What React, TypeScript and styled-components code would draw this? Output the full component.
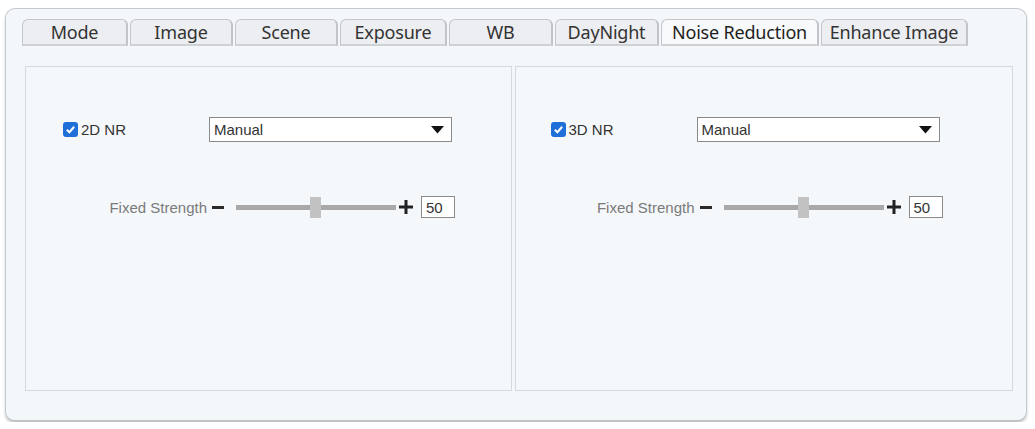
import React from 'react';
import styled, { createGlobalStyle } from 'styled-components';

const GlobalStyle = createGlobalStyle`
  html, body {
    margin: 0;
    padding: 0;
    background: #ffffff;
  }
  * {
    box-sizing: border-box;
  }
`;

const Frame = styled.div`
  margin: 8px 0 0 5px;
  width: 1022px;
  height: 414px;
  border: 1px solid #c6cacf;
  border-bottom: 2px solid #bfc3c8;
  border-radius: 10px;
  background: #f4f7fa;
  box-shadow: 0 2px 3px rgba(0, 0, 0, 0.18);
  display: flex;
  flex-direction: column;
`;

const TabBar = styled.div`
  display: flex;
  gap: 2px;
  padding: 10px 0 0 16px;
`;

const Tab = styled.div<{ $w: number; $active?: boolean }>`
  width: ${(p) => p.$w}px;
  height: 27px;
  display: flex;
  align-items: center;
  justify-content: center;
  border: 1px solid #c3c7cb;
  border-right: 2px solid #c0c4c8;
  border-bottom: 2px solid #cfd2d5;
  border-radius: 6px 6px 0 0;
  background: ${(p) => (p.$active ? '#f8f9fb' : '#eceef1')};
  color: ${(p) => (p.$active ? '#1e1e1e' : '#333333')};
  font-family: 'Noto Sans', 'Open Sans', sans-serif;
  font-size: 18px;
  letter-spacing: -0.2px;
  white-space: nowrap;
`;

const Panels = styled.div`
  display: flex;
  gap: 3px;
  padding: 20px 13px 0 19px;
`;

const Panel = styled.div<{ $w: number; $inset: number }>`
  width: ${(p) => p.$w}px;
  height: 325px;
  border: 1px solid #d6dadf;
  background: #f5f8fb;
  padding: 50px 0 0 ${(p) => p.$inset}px;
`;

const ModeRow = styled.div`
  display: flex;
  align-items: center;
  height: 25px;
`;

const CheckGroup = styled.label`
  width: 146px;
  display: flex;
  align-items: center;
  gap: 3px;
  font-family: 'Liberation Sans', Arial, sans-serif;
  font-size: 15px;
  color: #333333;
`;

const CheckBox = styled.span`
  width: 15px;
  height: 15px;
  border-radius: 3px;
  background: #1f6fd8;
  display: inline-flex;
  align-items: center;
  justify-content: center;
`;

const Select = styled.div`
  width: 243px;
  height: 25px;
  border: 1px solid #8a8a8a;
  background: #ffffff;
  display: flex;
  align-items: center;
  justify-content: space-between;
  padding: 0 7px 0 4px;
  font-family: 'Liberation Sans', Arial, sans-serif;
  font-size: 15px;
  color: #333333;
`;

const SliderRow = styled.div`
  display: flex;
  align-items: center;
  height: 22px;
  margin-top: 54px;
`;

const SliderLabel = styled.span`
  width: 144px;
  text-align: right;
  font-family: 'Liberation Sans', Arial, sans-serif;
  font-size: 15px;
  color: #7a7a7a;
`;

const Minus = styled.span`
  width: 12px;
  height: 3px;
  background: #2a2a2a;
  margin: 0 12px 0 5px;
`;

const Track = styled.div`
  position: relative;
  width: 160px;
  height: 5px;
  background: #a9a9a9;
`;

const Thumb = styled.span`
  position: absolute;
  top: -8px;
  width: 11px;
  height: 21px;
  background: #c2c2c2;
`;

const Plus = styled.span`
  margin: 0 8px 0 3px;
  display: inline-flex;
`;

const ValueBox = styled.div`
  width: 34px;
  height: 22px;
  border: 1px solid #8a8a8a;
  background: #ffffff;
  display: flex;
  align-items: center;
  padding-left: 4px;
  font-family: 'Liberation Sans', Arial, sans-serif;
  font-size: 15px;
  color: #333333;
`;

const tabs = [
  { name: 'Mode', w: 106 },
  { name: 'Image', w: 103 },
  { name: 'Scene', w: 103 },
  { name: 'Exposure', w: 107 },
  { name: 'WB', w: 104 },
  { name: 'DayNight', w: 104 },
  { name: 'Noise Reduction', w: 158, active: true },
  { name: 'Enhance Image', w: 147 },
];

const panels = [
  { label: '2D NR', w: 487, inset: 37 },
  { label: '3D NR', w: 499, inset: 35 },
];

const NRPanel = ({ label, w, inset }: { label: string; w: number; inset: number }) => {
  const value = 50;
  return (
    <Panel $w={w} $inset={inset}>
      <ModeRow>
        <CheckGroup>
          <CheckBox>
            <svg width="11" height="11" viewBox="0 0 12 12">
              <path d="M2 6.3 L4.8 9 L10 3" fill="none" stroke="#ffffff" strokeWidth="2.2" />
            </svg>
          </CheckBox>
          {label}
        </CheckGroup>
        <Select>
          Manual
          <svg width="13" height="8" viewBox="0 0 13 8">
            <path d="M0 0 H13 L6.5 7.5 Z" fill="#111111" />
          </svg>
        </Select>
      </ModeRow>
      <SliderRow>
        <SliderLabel>Fixed Strength</SliderLabel>
        <Minus />
        <Track>
          <Thumb style={{ left: `${(value / 100) * 160 - 6}px` }} />
        </Track>
        <Plus>
          <svg width="14" height="14" viewBox="0 0 14 14">
            <path d="M0 7 H14 M7 0 V14" stroke="#222222" strokeWidth="3" />
          </svg>
        </Plus>
        <ValueBox>{value}</ValueBox>
      </SliderRow>
    </Panel>
  );
};

const App = () => (
  <>
    <GlobalStyle />
    <Frame>
      <TabBar>
        {tabs.map((t) => (
          <Tab key={t.name} $w={t.w} $active={t.active}>
            {t.name}
          </Tab>
        ))}
      </TabBar>
      <Panels>
        {panels.map((p) => (
          <NRPanel key={p.label} {...p} />
        ))}
      </Panels>
    </Frame>
  </>
);

export default App;
